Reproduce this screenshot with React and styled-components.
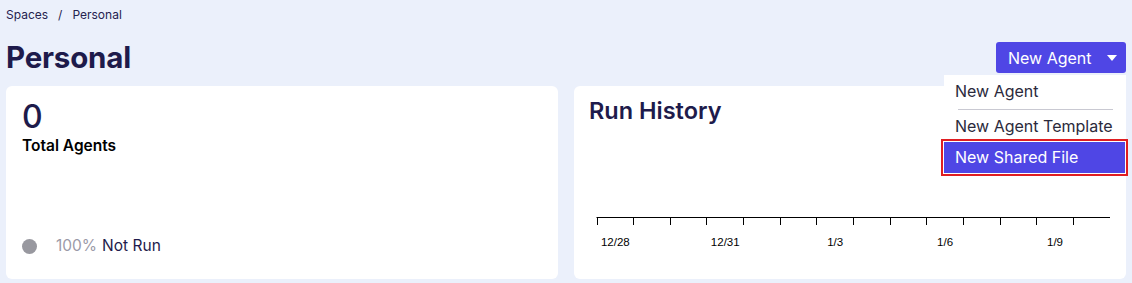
import React from 'react';
import styled, { createGlobalStyle } from 'styled-components';

const GlobalStyle = createGlobalStyle`
  html, body {
    margin: 0;
    padding: 0;
    background: #ebf0fb;
    font-family: Inter, "Noto Sans", sans-serif;
  }
`

const Page = styled.div`
  width: 1132px;
  height: 283px;
  box-sizing: border-box;
  padding: 7px 6px 0 6px;
  overflow: hidden;
`

const Crumbs = styled.div`
  font-size: 12px;
  line-height: 16px;
  color: #25224f;
  display: flex;
  gap: 10px;
`

const Header = styled.div`
  display: flex;
  justify-content: space-between;
  align-items: center;
  margin-top: 19px;
  height: 31px;
`

const Title = styled.h1`
  margin: 0;
  font-size: 29.5px;
  line-height: 31px;
  font-weight: 700;
  color: #1e1b4b;
  letter-spacing: -0.2px;
`

const MenuWrap = styled.div`
  position: relative;
`

const Button = styled.button`
  display: flex;
  align-items: center;
  gap: 15px;
  height: 31px;
  width: 130px;
  box-sizing: border-box;
  padding: 0 12px;
  border: none;
  border-radius: 3px;
  background: #4f46e5;
  color: #fff;
  font-family: inherit;
  font-size: 16px;
  white-space: nowrap;
`

const Caret = styled.span`
  width: 0;
  height: 0;
  border-left: 5px solid transparent;
  border-right: 5px solid transparent;
  border-top: 6px solid #fff;
`

const Menu = styled.div`
  position: absolute;
  top: 33px;
  right: 0;
  width: 182px;
  padding: 1px 0 14px;
  background: #fff;
  z-index: 2;
`

const MenuItem = styled.div`
  height: 31px;
  line-height: 31px;
  padding: 0 12px 0 11px;
  font-size: 16px;
  white-space: nowrap;
  color: ${p => (p.active ? '#fff' : '#2b2a3c')};
  background: ${p => (p.active ? '#4f46e5' : 'transparent')};
  box-shadow: ${p => (p.active ? '0 0 0 1px #fff, 0 0 0 3px #e01e22' : 'none')};
  margin-right: ${p => (p.active ? '1px' : '0')};
`

const Separator = styled.div`
  height: 1px;
  margin: 2px 13px 1px 14px;
  background: #c9c9d2;
`

const Cards = styled.div`
  display: grid;
  grid-template-columns: 1fr 1fr;
  gap: 16px;
  margin-top: 13px;
`

const Card = styled.div`
  height: 193px;
  box-sizing: border-box;
  background: #fff;
  border-radius: 6px;
  display: flex;
  flex-direction: column;
  padding: ${p => p.pad || '0'};
`

const BigNumber = styled.div`
  font-size: 32px;
  line-height: 36px;
  font-weight: 500;
  color: #1e1b4b;
  margin-top: 13px;
`

const CardLabel = styled.div`
  font-size: 15.5px;
  line-height: 20px;
  font-weight: 600;
  color: #000;
  margin-top: 1px;
`

const Legend = styled.div`
  margin-top: auto;
  margin-bottom: 24px;
  display: flex;
  align-items: center;
  font-size: 15.5px;
  line-height: 18px;
`

const Dot = styled.span`
  width: 15px;
  height: 15px;
  border-radius: 50%;
  background: #98989f;
  margin-right: 19px;
`

const Pct = styled.span`
  color: #9b9aa8;
  margin-right: 5px;
`

const Status = styled.span`
  color: #1e1b4b;
`

const ChartTitle = styled.div`
  font-size: 23.5px;
  line-height: 30px;
  font-weight: 600;
  color: #1e1b4b;
  margin: 10px 0 0 15px;
`

const ChartArea = styled.div`
  flex: 1;
  display: flex;
  align-items: flex-end;
  padding: 0 0 16px 22px;
`

const ticks = Array.from({ length: 14 }, (_, i) => i);
const labels = [
  { band: 0, text: '12/28' },
  { band: 3, text: '12/31' },
  { band: 6, text: '1/3' },
  { band: 9, text: '1/6' },
  { band: 12, text: '1/9' },
];
const step = 36.64;

function Axis() {
  return (
    <svg width="520" height="54" style={{ display: 'block' }}>
      <line x1="0.5" y1="8.5" x2="514" y2="8.5" stroke="#000" strokeWidth="1" />
      {ticks.map(i => {
        const x = Math.round(0.5 + i * step) + 0.5;
        return <line key={i} x1={x} y1="8.5" x2={x} y2="16" stroke="#000" strokeWidth="1" />;
      })}
      {labels.map(l => (
        <text
          key={l.text}
          x={1 + (l.band + 0.5) * step}
          y="37"
          textAnchor="middle"
          fontSize="11.5"
          fontFamily='"Liberation Sans", Arial, sans-serif'
          fill="#000"
        >
          {l.text}
        </text>
      ))}
    </svg>
  );
}

export default function App() {
  return (
    <Page>
      <GlobalStyle />
      <Crumbs>
        <span>Spaces</span>
        <span>/</span>
        <span>Personal</span>
      </Crumbs>
      <Header>
        <Title>Personal</Title>
        <MenuWrap>
          <Button>
            New Agent
            <Caret />
          </Button>
          <Menu>
            <MenuItem>New Agent</MenuItem>
            <Separator />
            <MenuItem>New Agent Template</MenuItem>
            <MenuItem active>New Shared File</MenuItem>
          </Menu>
        </MenuWrap>
      </Header>
      <Cards>
        <Card pad="0 16px 0 16px">
          <BigNumber>0</BigNumber>
          <CardLabel>Total Agents</CardLabel>
          <Legend>
            <Dot />
            <Pct>100%</Pct>
            <Status>Not Run</Status>
          </Legend>
        </Card>
        <Card>
          <ChartTitle>Run History</ChartTitle>
          <ChartArea>
            <Axis />
          </ChartArea>
        </Card>
      </Cards>
    </Page>
  );
}
